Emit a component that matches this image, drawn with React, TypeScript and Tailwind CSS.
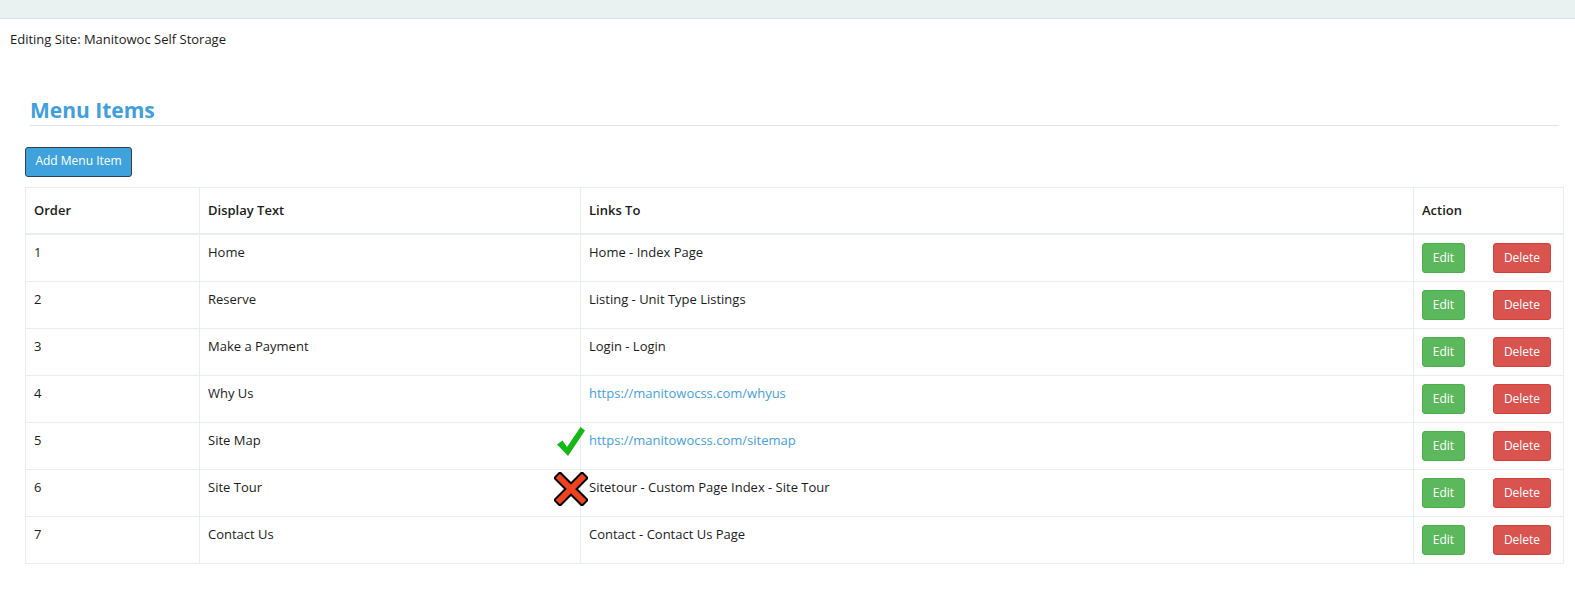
import React from 'react'

interface MenuRow {
  order: number
  text: string
  link: string
  url?: boolean
  mark?: 'ok' | 'bad'
}

const rows: MenuRow[] = [
  { order: 1, text: 'Home', link: 'Home - Index Page' },
  { order: 2, text: 'Reserve', link: 'Listing - Unit Type Listings' },
  { order: 3, text: 'Make a Payment', link: 'Login - Login' },
  { order: 4, text: 'Why Us', link: 'https://manitowocss.com/whyus', url: true },
  { order: 5, text: 'Site Map', link: 'https://manitowocss.com/sitemap', url: true, mark: 'ok' },
  { order: 6, text: 'Site Tour', link: 'Sitetour - Custom Page Index - Site Tour', mark: 'bad' },
  { order: 7, text: 'Contact Us', link: 'Contact - Contact Us Page' },
]

function CheckMark() {
  return (
    <svg width="28" height="29" viewBox="0 0 28 29" className="absolute left-[-24px] top-[4px]">
      <polygon points="0,17.5 5.5,13.5 10,20 23.5,0 28,3.5 11,29" fill="#16b816" />
    </svg>
  )
}

function CrossMark() {
  return (
    <svg width="34" height="34" viewBox="0 0 34 34" className="absolute left-[-27px] top-[2px]">
      <path d="M6 6 L28 28 M28 6 L6 28" stroke="#000" strokeWidth="10" strokeLinecap="square" />
      <path d="M6 6 L28 28 M28 6 L6 28" stroke="#f0421f" strokeWidth="6" strokeLinecap="square" />
    </svg>
  )
}

export default function App() {
  const cell = 'border border-[#e8eeee] px-2 pt-2 align-top'
  return (
    <div className="min-h-[592px] bg-white text-[13px] leading-[18.6px] text-[#1c1c1c] font-['Open_Sans',sans-serif]">
      <div className="h-[19px] bg-[#e9f2f1] border-b border-[#d6e4e4]" />
      <div className="pl-[10px] pt-[11px]">Editing Site: Manitowoc Self Storage</div>

      <div className="pl-[25px] pr-[12px]">
        {/* heading */}
        <div className="ml-[5px] mr-[4px] mt-[47px] border-b border-[#e3e3e3] pb-[1px]">
          <h1 className="text-[21px] font-bold leading-[28px] text-[#3fa0dc]">Menu Items</h1>
        </div>

        <button className="mt-[21px] h-[30px] w-[107px] rounded-[3px] border border-[#2f4050] bg-[#3fa2dd] text-[12px] text-white">
          Add Menu Item
        </button>

        <table className="mt-[10px] w-[1538px] table-fixed border-collapse">
          <colgroup>
            <col className="w-[174px]" />
            <col className="w-[381px]" />
            <col className="w-[833px]" />
            <col className="w-[150px]" />
          </colgroup>
          <thead>
            <tr className="h-[47px]">
              {['Order', 'Display Text', 'Links To', 'Action'].map((h) => (
                <th
                  key={h}
                  className="border border-b-2 border-[#e8eeee] px-2 text-left align-middle font-semibold"
                >
                  {h}
                </th>
              ))}
            </tr>
          </thead>
          <tbody>
            {rows.map((r) => (
              <tr key={r.order} className="h-[47px]">
                <td className={cell}>{r.order}</td>
                <td className={cell}>{r.text}</td>
                <td className={cell + ' relative'}>
                  {r.mark === 'ok' && <CheckMark />}
                  {r.mark === 'bad' && <CrossMark />}
                  {r.url ? <span className="text-[#45a1dc]">{r.link}</span> : r.link}
                </td>
                <td className="border border-[#e8eeee] px-2 py-2 align-top">
                  <div className="flex">
                    <button className="h-[30px] w-[43px] rounded-[3px] border border-[#4cae4c] bg-[#5cb85c] text-[12px] text-white">
                      Edit
                    </button>
                    <button className="ml-[28px] h-[30px] w-[58px] rounded-[3px] border border-[#d43f3a] bg-[#d9534f] text-[12px] text-white">
                      Delete
                    </button>
                  </div>
                </td>
              </tr>
            ))}
          </tbody>
        </table>
      </div>
    </div>
  )
}
